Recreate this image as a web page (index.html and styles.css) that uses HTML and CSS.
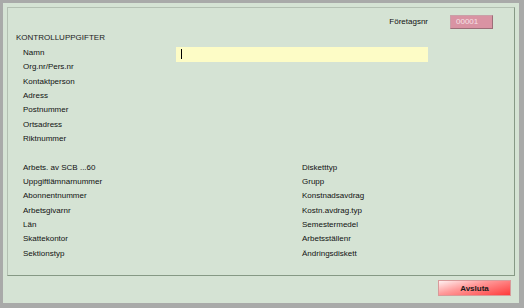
FILE: index.html
```html
<!DOCTYPE html>
<html lang="sv">
<head>
    <meta charset="UTF-8">
    <meta name="viewport" content="width=device-width, initial-scale=1.0">
    <title>Kontrolluppgifter</title>
    <link rel="stylesheet" href="styles.css">
</head>
<body>
    <div class="window">
        <div class="panel">
            <div class="company-row">
                <span class="company-label">Företagsnr</span>
                <span class="company-no">00001</span>
            </div>
            <div class="section-title">KONTROLLUPPGIFTER</div>
            <div class="fields">
                <span>Namn</span>
                <div class="name-input"><span class="caret"></span></div>
                <span>Org.nr/Pers.nr</span>
                <span>Kontaktperson</span>
                <span>Adress</span>
                <span>Postnummer</span>
                <span>Ortsadress</span>
                <span>Riktnummer</span>
            </div>
            <div class="codes">
                <span>Arbets. av SCB ...60</span>
                <span>Disketttyp</span>
                <span>Uppgiftlämnarnummer</span>
                <span>Grupp</span>
                <span>Abonnentnummer</span>
                <span>Konstnadsavdrag</span>
                <span>Arbetsgivarnr</span>
                <span>Kostn.avdrag.typ</span>
                <span>Län</span>
                <span>Semestermedel</span>
                <span>Skattekontor</span>
                <span>Arbetsställenr</span>
                <span>Sektionstyp</span>
                <span>Ändringsdiskett</span>
            </div>
        </div>
        <div class="footer">
            <button class="close-btn">Avsluta</button>
        </div>
    </div>
</body>
</html>
```
FILE: styles.css
```css
html, body {
    margin: 0;
    padding: 0;
}

body {
    width: 524px;
    height: 308px;
    font-family: "Liberation Sans", Arial, sans-serif;
    font-size: 8px;
    color: #111;
    background-color: #d5e3d4;
}

.window {
    box-sizing: border-box;
    width: 524px;
    height: 308px;
    border-style: solid;
    border-color: #a9aaa9;
    border-width: 3px 5px 5px 3px;
    background-color: #d5e3d4;
    padding: 4px 4px 0 4px;
}

.panel {
    border: 1px solid;
    border-color: #b3c0b2 #869985 #869985 #b3c0b2;
    height: 267px;
    padding: 0 0 0 8px;
}

.company-row {
    display: flex;
    justify-content: flex-end;
    align-items: center;
    gap: 22px;
    padding: 7px 21px 0 0;
    height: 14px;
}

.company-label {
    margin-top: -2px;
}

.company-no {
    box-sizing: border-box;
    width: 43px;
    height: 14px;
    line-height: 12px;
    padding-left: 5px;
    background-color: #d993a3;
    border: 1px solid;
    border-color: #c9a0a8 #9c6e78 #9c6e78 #c9a0a8;
    color: #f6e2e7;
}

.section-title {
    margin-top: 2px;
    line-height: 14.33px;
    color: #222;
}

.fields {
    display: grid;
    grid-template-columns: 153px 252px;
    grid-auto-rows: 14.33px;
    align-items: center;
    padding-left: 7px;
}

.fields span {
    grid-column: 1;
}

.name-input {
    grid-column: 2;
    grid-row: 1;
    align-self: start;
    margin-top: 1.5px;
    height: 15px;
    background-color: #fdfcc6;
    display: flex;
    align-items: center;
    padding-left: 5px;
}

.caret {
    width: 1px;
    height: 10px;
    background-color: #000;
}

.codes {
    display: grid;
    grid-template-columns: 279px 1fr;
    grid-auto-rows: 14.33px;
    align-items: center;
    padding-left: 7px;
    margin-top: 14.33px;
}

.footer {
    display: flex;
    justify-content: flex-end;
    padding: 4px 4px 0 0;
}

.close-btn {
    width: 73px;
    height: 16px;
    padding: 0;
    font-family: "Liberation Sans", Arial, sans-serif;
    font-size: 8px;
    font-weight: bold;
    color: #1a1a1a;
    border: 1px solid #d89a9a;
    background: linear-gradient(165deg, #fff0f0 0%, #ff9a9a 40%, #ff3a3a 100%);
    cursor: pointer;
}
```
